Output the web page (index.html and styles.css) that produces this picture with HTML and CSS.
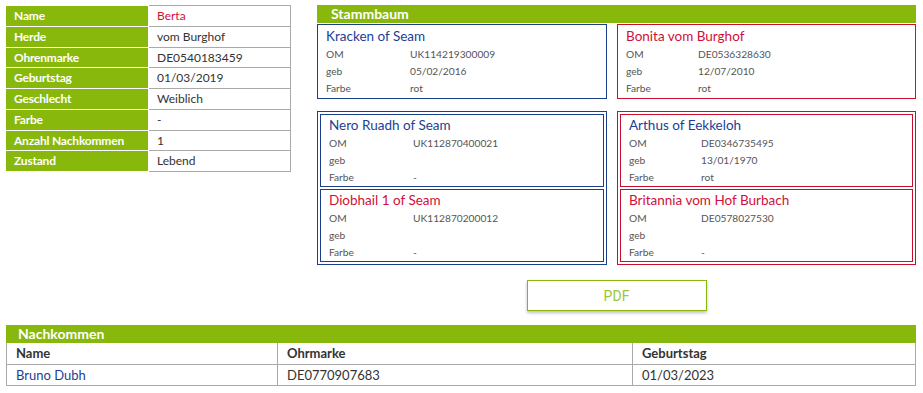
FILE: index.html
```html
<!DOCTYPE html>
<html lang="de">
<head>
<meta charset="utf-8">
<title>Berta</title>
<link rel="stylesheet" href="styles.css">
</head>
<body>
<div class="page">
  <div class="top">
    <div class="info">
      <div class="lbl">Name</div><div class="val val-red">Berta</div>
      <div class="lbl">Herde</div><div class="val">vom Burghof</div>
      <div class="lbl">Ohrenmarke</div><div class="val">DE0540183459</div>
      <div class="lbl">Geburtstag</div><div class="val">01/03/2019</div>
      <div class="lbl">Geschlecht</div><div class="val">Weiblich</div>
      <div class="lbl">Farbe</div><div class="val">-</div>
      <div class="lbl">Anzahl Nachkommen</div><div class="val">1</div>
      <div class="lbl">Zustand</div><div class="val">Lebend</div>
    </div>

    <section class="tree">
      <h2 class="bar">Stammbaum</h2>
      <div class="tree-grid">
        <div class="card side-m solo">
          <div class="cname c-m">Kracken of Seam</div>
          <div class="crow"><span>OM</span><span>UK114219300009</span></div>
          <div class="crow"><span>geb</span><span>05/02/2016</span></div>
          <div class="crow"><span>Farbe</span><span>rot</span></div>
        </div>
        <div class="card side-f solo">
          <div class="cname c-f">Bonita vom Burghof</div>
          <div class="crow"><span>OM</span><span>DE0536328630</span></div>
          <div class="crow"><span>geb</span><span>12/07/2010</span></div>
          <div class="crow"><span>Farbe</span><span>rot</span></div>
        </div>
        <div class="group side-m">
          <div class="card side-m">
            <div class="cname c-m">Nero Ruadh of Seam</div>
            <div class="crow"><span>OM</span><span>UK112870400021</span></div>
            <div class="crow"><span>geb</span><span></span></div>
            <div class="crow"><span>Farbe</span><span>-</span></div>
          </div>
          <div class="card side-m">
            <div class="cname c-f">Diobhail 1 of Seam</div>
            <div class="crow"><span>OM</span><span>UK112870200012</span></div>
            <div class="crow"><span>geb</span><span></span></div>
            <div class="crow"><span>Farbe</span><span>-</span></div>
          </div>
        </div>
        <div class="group side-f">
          <div class="card side-f">
            <div class="cname c-m">Arthus of Eekkeloh</div>
            <div class="crow"><span>OM</span><span>DE0346735495</span></div>
            <div class="crow"><span>geb</span><span>13/01/1970</span></div>
            <div class="crow"><span>Farbe</span><span>rot</span></div>
          </div>
          <div class="card side-f">
            <div class="cname c-f">Britannia vom Hof Burbach</div>
            <div class="crow"><span>OM</span><span>DE0578027530</span></div>
            <div class="crow"><span>geb</span><span></span></div>
            <div class="crow"><span>Farbe</span><span>-</span></div>
          </div>
        </div>
      </div>
      <div class="pdf-wrap"><button class="pdf" type="button">PDF</button></div>
    </section>
  </div>

  <section class="offspring">
    <h2 class="bar bar-wide">Nachkommen</h2>
    <table class="otable">
      <thead>
        <tr><th class="col1">Name</th><th class="col2">Ohrmarke</th><th>Geburtstag</th></tr>
      </thead>
      <tbody>
        <tr><td class="c-m">Bruno Dubh</td><td>DE0770907683</td><td>01/03/2023</td></tr>
      </tbody>
    </table>
  </section>
</div>
</body>
</html>
```

FILE: styles.css
```css
* { box-sizing: border-box; }
html, body { margin: 0; padding: 0; background: #fff; }
body {
  font-family: Lato, "Open Sans", sans-serif;
  font-size: 13px;
  color: #333;
}
.page { padding: 5px 7px 0 6px; }

.top { display: flex; align-items: flex-start; gap: 25px; }

/* info table */
.info {
  display: grid;
  grid-template-columns: 142px 143px;
  width: 286px;
  border-top: 1px solid transparent;
}
.lbl {
  background: #88b80c;
  color: #fff;
  font-size: 12px;
  letter-spacing: -0.2px;
  font-weight: 700;
  height: 20.75px;
  line-height: 19.75px;
  padding-left: 8px;
  border-bottom: 1px solid #fff;
  white-space: nowrap;
}
.val {
  margin-left: 1px;
  height: 20.75px;
  line-height: 19.75px;
  padding-left: 8px;
  font-size: 12px;
  border-right: 1px solid #aaa;
  border-bottom: 1px solid #aaa;
  color: #333;
}
.val:nth-child(2) { box-shadow: 0 -1px 0 #aaa; }
.val-red { color: #d0103a; }

/* headers */
.bar {
  margin: 0;
  background: #88b80c;
  color: #fff;
  font-size: 14px;
  font-weight: 700;
  height: 18px;
  line-height: 18px;
  padding-left: 14px;
}
.bar-wide { padding-left: 12px; }

/* tree */
.tree { flex: 1; }
.tree-grid {
  display: grid;
  grid-template-columns: 290px 299px;
  column-gap: 10px;
  row-gap: 12px;
  margin-top: 1px;
}
.card {
  border: 1px solid #1b3f8b;
  padding: 0 8px;
}
.card.solo { padding-top: 1px; padding-bottom: 1px; }
.side-m { border-color: #1b3f8b; --vx: 84px; }
.side-f { border-color: #c8102e; --vx: 72px; }
.group {
  border: 1px solid #1b3f8b;
  padding: 2px;
  display: flex;
  flex-direction: column;
  gap: 2px;
}
.group.side-f { border-color: #c8102e; }
.cname {
  font-size: 13.5px;
  line-height: 20px;
  white-space: nowrap;
}
.c-m { color: #1c3f94; }
.c-f { color: #d0103a; }
.crow {
  display: grid;
  grid-template-columns: var(--vx) 1fr;
  font-size: 10.2px;
  line-height: 17px;
  height: 17px;
  color: #555;
}

.pdf-wrap { display: flex; justify-content: center; margin-top: 15px; }
.pdf {
  width: 180px;
  height: 31px;
  background: #fff;
  border: 1px solid #88b80c;
  color: #9cc63a;
  font-family: Roboto, "Liberation Sans", sans-serif;
  font-size: 14px;
  box-shadow: 0 2px 3px rgba(0,0,0,0.25);
  padding: 0;
}

/* offspring */
.offspring { margin-top: 14px; width: 910px; }
.otable {
  width: 100%;
  border-collapse: collapse;
  font-size: 13px;
}
.otable th, .otable td {
  border: 1px solid #aaa;
  border-top: 0;
  height: 21px;
  padding: 0 9px;
  text-align: left;
  line-height: 20px;
}
.otable th { font-weight: 700; color: #333; }
.otable td { color: #333; }
.otable td.c-m { color: #1c3f94; }
.col1 { width: 271px; }
.col2 { width: 355px; }
```
